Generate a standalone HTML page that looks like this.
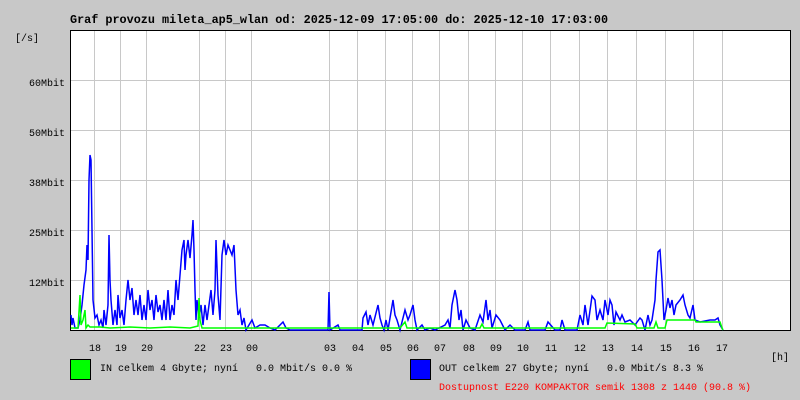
<!DOCTYPE html>
<html><head><meta charset="utf-8"><style>
html,body{margin:0;padding:0;background:#c8c8c8;}
svg{display:block;font-family:"Liberation Mono",monospace;font-size:10px;}
text{white-space:pre;}
</style></head><body>
<svg width="800" height="400" xmlns="http://www.w3.org/2000/svg" shape-rendering="crispEdges" xml:space="preserve">
<rect width="800" height="400" fill="#c8c8c8"/>
<text x="70" y="23" font-weight="bold" font-size="11.8">Graf provozu mileta_ap5_wlan od: 2025-12-09 17:05:00 do: 2025-12-10 17:03:00</text>
<rect x="70.5" y="30.5" width="720" height="300" fill="#fff" stroke="#000"/>
<g stroke="#c8c8c8" stroke-width="1">
<path d="M71 80.5H790M71 130.5H790M71 180.5H790M71 230.5H790M71 280.5H790"/>
<path d="M94.5 31V330M120.5 31V330M146.5 31V330M199.5 31V330M225.5 31V330M251.5 31V330M329.5 31V330M357.5 31V330M385.5 31V330M412.5 31V330M439.5 31V330M468.5 31V330M495.5 31V330M522.5 31V330M550.5 31V330M579.5 31V330M607.5 31V330M636.5 31V330M665.5 31V330M693.5 31V330M722.5 31V330"/>
</g>
<g text-anchor="end">
<text x="39" y="41">[/s]</text>
<text x="65" y="86">60Mbit</text>
<text x="65" y="136">50Mbit</text>
<text x="65" y="186">38Mbit</text>
<text x="65" y="236">25Mbit</text>
<text x="65" y="286">12Mbit</text>
</g>
<g text-anchor="middle">
<text x="95" y="351">18</text><text x="121" y="351">19</text><text x="147" y="351">20</text>
<text x="200" y="351">22</text><text x="226" y="351">23</text><text x="252" y="351">00</text>
<text x="330" y="351">03</text><text x="358" y="351">04</text><text x="386" y="351">05</text>
<text x="413" y="351">06</text><text x="440" y="351">07</text><text x="469" y="351">08</text>
<text x="496" y="351">09</text><text x="523" y="351">10</text><text x="551" y="351">11</text>
<text x="580" y="351">12</text><text x="608" y="351">13</text><text x="637" y="351">14</text>
<text x="666" y="351">15</text><text x="694" y="351">16</text><text x="722" y="351">17</text>
</g>
<text x="771" y="360">[h]</text>
<polyline fill="none" stroke="#0000ff" stroke-width="1.5" shape-rendering="auto" points="71,315 72,325 73,318 75,328 78,328 80,320 82,305 84,285 86,270 87,245 88,260 89,180 90,155 91,160 92,230 93,300 95,318 97,315 99,325 101,320 103,328 104,310 106,325 108,305 109,235 110,280 111,300 113,325 115,310 117,325 118,295 120,318 122,310 124,325 126,300 128,280 130,300 132,288 134,315 136,300 138,315 140,295 142,320 144,305 146,320 148,290 150,310 152,300 154,320 156,295 158,312 160,305 162,320 164,300 166,320 168,290 170,320 172,305 174,315 176,280 178,300 180,275 182,250 184,240 185,270 186,255 188,240 190,258 192,235 193,220 194,250 195,290 196,320 197,300 199,318 201,305 203,325 205,305 207,320 209,305 211,290 213,315 215,290 216,240 218,295 220,320 222,255 224,240 226,255 228,245 230,250 232,255 234,245 236,290 238,315 240,310 242,325 244,318 246,330 252,320 255,328 260,325 265,325 270,328 275,330 283,322 286,328 290,330 328,330 329,292 330,330 338,325 340,330 362,330 363,318 366,312 368,325 370,315 373,325 378,305 380,318 382,325 384,330 386,320 388,330 393,300 395,315 397,320 400,330 405,310 408,320 410,315 413,305 415,320 417,330 422,325 425,330 430,328 435,330 445,325 448,320 450,328 452,305 455,290 457,300 459,320 461,310 463,330 466,320 470,328 475,330 480,315 483,322 486,300 488,320 490,310 492,328 496,315 500,320 505,330 510,325 515,330 525,330 528,322 530,330 545,330 548,322 555,330 560,330 562,320 565,330 577,330 580,315 583,325 585,305 588,325 592,296 595,300 597,320 600,310 603,320 605,300 608,315 610,300 612,305 614,325 616,312 620,320 622,315 625,322 630,320 635,325 640,318 642,320 645,330 648,315 650,325 652,320 655,300 656,280 658,252 660,250 662,280 664,320 666,310 668,298 670,308 672,300 674,315 676,305 680,300 683,295 685,305 688,315 690,318 693,305 695,320 700,322 710,320 715,320 718,318 720,325 723,330"/>
<polyline fill="none" stroke="#00ff00" stroke-width="1.5" shape-rendering="auto" points="71,328 78,328 80,295 81,325 83,320 85,310 86,328 88,325 90,327 100,327 110,328 130,327 150,328 170,327 190,328 198,326 199,298 200,320 202,328 250,328 400,328 405,322 407,328 480,328 482,324 484,328 605,328 607,323 635,324 637,328 654,328 656,322 658,328 665,328 667,320 695,320 696,322 720,322 722,328 723,330"/>
<rect x="70.5" y="359.5" width="20" height="20" fill="#00ff00" stroke="#000"/>
<text x="100" y="371">IN celkem 4 Gbyte; nyní   0.0 Mbit/s 0.0 %</text>
<rect x="410.5" y="359.5" width="20" height="20" fill="#0000ff" stroke="#000"/>
<text x="439" y="371">OUT celkem 27 Gbyte; nyní   0.0 Mbit/s 8.3 %</text>
<text x="439" y="390" fill="#ff0000">Dostupnost E220 KOMPAKTOR semik 1308 z 1440 (90.8 %)</text>
</svg>
</body></html>
